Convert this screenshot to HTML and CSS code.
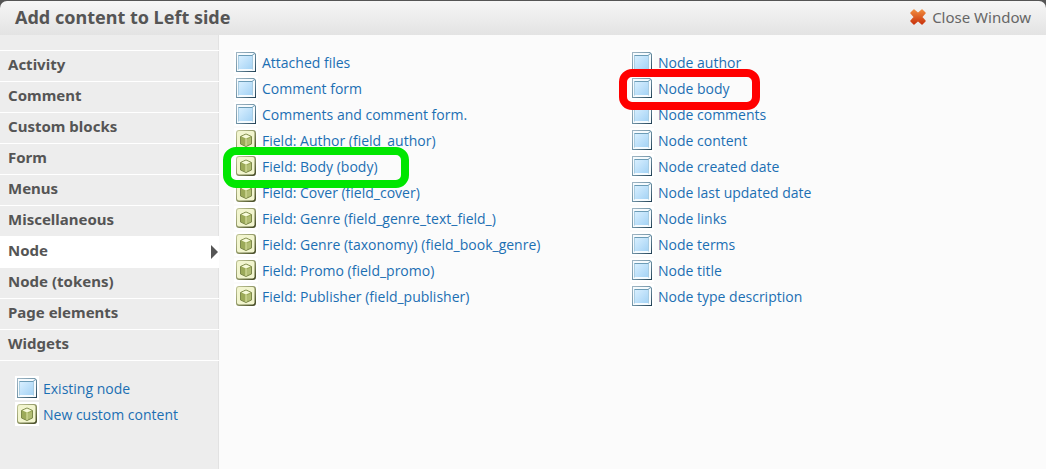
FILE: index.html
```html
<!DOCTYPE html>
<html lang="en">
  <head>
    <meta charset="utf-8">
    <title>Add content to Left side</title>
    <link rel="stylesheet" href="styles.css">
  </head>
  <body>
    <!-- icon shapes used by the lists -->
    <svg class="sprite" aria-hidden="true">
      <defs>
        <linearGradient id="blue" x1="0" y1="0" x2="1" y2="1">
          <stop offset="0" stop-color="#d8efff" />
          <stop offset="1" stop-color="#a5d3f5" />
        </linearGradient>
        <linearGradient id="edge" x1="0" y1="0" x2="1" y2="1">
          <stop offset="0" stop-color="#a3b8c6" />
          <stop offset="0.5" stop-color="#7295a8" />
          <stop offset="1" stop-color="#1e3d51" />
        </linearGradient>
        <linearGradient id="olive" x1="0" y1="0" x2="1" y2="1">
          <stop offset="0" stop-color="#c5c99c" />
          <stop offset="0.5" stop-color="#8f9665" />
          <stop offset="1" stop-color="#3d421e" />
        </linearGradient>
        <linearGradient id="orange" x1="0" y1="0" x2="0" y2="1">
          <stop offset="0" stop-color="#f08a3c" />
          <stop offset="1" stop-color="#c9330c" />
        </linearGradient>
      </defs>
      <symbol id="node" viewBox="0 0 24 24">
        <path d="M2 2h18l2 2v18H2z" fill="url(#edge)" />
        <path d="M3 3h16.500l1.500 1.500V21H3z" fill="#f6fbfe" />
        <path d="M5 6h13v13H5z" fill="url(#blue)" />
        <path d="M4.500 19.500V5.500h14v14" fill="none" stroke="#a9cde2" />
        <path d="M4.500 5.500h13.500l2.500-2" fill="none" stroke="#6c9cb6" />
      </symbol>
      <symbol id="cube" viewBox="0 0 24 24">
        <rect x="2" y="2" width="20" height="20" rx="3" fill="url(#olive)" />
        <rect x="3" y="3" width="17.500" height="17.500" rx="2" fill="#f2f5cf" />
        <path d="M6.500 8.500L12 6l5.500 2.500v7.500L12 18.500 6.500 16z" fill="#9caa59" stroke="#7d894b" stroke-linejoin="round" />
        <path d="M7.500 8.500L12 6.500l4.500 2L12 10.500z" fill="#f7fadb" />
        <path d="M12.500 11.500v6l4.500-2V9.500z" fill="#b1bd73" />
        <path d="M12 10.500V18" stroke="#e3e9ae" />
      </symbol>
    </svg>

    <div class="modal">
      <div class="modal-header">
        <h1 class="modal-title">Add content to Left side</h1>
        <a class="close" href="#">
          <svg class="close-icon" viewBox="0 0 16 16" aria-hidden="true">
            <path d="M4 1L8 4.500 12 1l3 3-3.500 4 3.500 4-3 3-4-3.500L4 15l-3-3 3.500-4L1 4z" fill="url(#orange)" stroke="url(#orange)" stroke-width="1.500" stroke-linejoin="round" />
          </svg>
          Close Window
        </a>
      </div>

      <div class="modal-content">
        <div class="sidebar">
          <ul class="categories">
            <li><a class="category" href="#">Activity</a></li>
            <li><a class="category" href="#">Comment</a></li>
            <li><a class="category" href="#">Custom blocks</a></li>
            <li><a class="category" href="#">Form</a></li>
            <li><a class="category" href="#">Menus</a></li>
            <li><a class="category" href="#">Miscellaneous</a></li>
            <li><a class="category active" href="#">Node</a></li>
            <li><a class="category" href="#">Node (tokens)</a></li>
            <li><a class="category" href="#">Page elements</a></li>
            <li><a class="category" href="#">Widgets</a></li>
          </ul>
          <ul class="types root-types">
            <li class="type"><svg class="icon"><use href="#node" /></svg><a href="#">Existing node</a></li>
            <li class="type"><svg class="icon"><use href="#cube" /></svg><a href="#">New custom content</a></li>
          </ul>
        </div>

        <div class="columns">
          <ul class="types">
            <li class="type"><svg class="icon"><use href="#node" /></svg><a href="#">Attached files</a></li>
            <li class="type"><svg class="icon"><use href="#node" /></svg><a href="#">Comment form</a></li>
            <li class="type"><svg class="icon"><use href="#node" /></svg><a href="#">Comments and comment form.</a></li>
            <li class="type"><svg class="icon"><use href="#cube" /></svg><a href="#">Field: Author (field_author)</a></li>
            <li class="type mark mark-green"><svg class="icon"><use href="#cube" /></svg><a href="#">Field: Body (body)</a></li>
            <li class="type"><svg class="icon"><use href="#cube" /></svg><a href="#">Field: Cover (field_cover)</a></li>
            <li class="type"><svg class="icon"><use href="#cube" /></svg><a href="#">Field: Genre (field_genre_text_field_)</a></li>
            <li class="type"><svg class="icon"><use href="#cube" /></svg><a href="#">Field: Genre (taxonomy) (field_book_genre)</a></li>
            <li class="type"><svg class="icon"><use href="#cube" /></svg><a href="#">Field: Promo (field_promo)</a></li>
            <li class="type"><svg class="icon"><use href="#cube" /></svg><a href="#">Field: Publisher (field_publisher)</a></li>
          </ul>
          <ul class="types">
            <li class="type"><svg class="icon"><use href="#node" /></svg><a href="#">Node author</a></li>
            <li class="type mark mark-red"><svg class="icon"><use href="#node" /></svg><a href="#">Node body</a></li>
            <li class="type"><svg class="icon"><use href="#node" /></svg><a href="#">Node comments</a></li>
            <li class="type"><svg class="icon"><use href="#node" /></svg><a href="#">Node content</a></li>
            <li class="type"><svg class="icon"><use href="#node" /></svg><a href="#">Node created date</a></li>
            <li class="type"><svg class="icon"><use href="#node" /></svg><a href="#">Node last updated date</a></li>
            <li class="type"><svg class="icon"><use href="#node" /></svg><a href="#">Node links</a></li>
            <li class="type"><svg class="icon"><use href="#node" /></svg><a href="#">Node terms</a></li>
            <li class="type"><svg class="icon"><use href="#node" /></svg><a href="#">Node title</a></li>
            <li class="type"><svg class="icon"><use href="#node" /></svg><a href="#">Node type description</a></li>
          </ul>
        </div>
      </div>
    </div>
  </body>
</html>
```

FILE: styles.css
```css
*,
*::after {
  box-sizing: border-box;
}
body {
  margin: 0;
  background-color: #555;
  color: #555;
  font-family: "Lucida Grande", "Noto Sans", "Open Sans", sans-serif;
  font-size: 14px;
}
ul {
  list-style: none;
  margin: 0;
  padding: 0;
}
a {
  color: #1b6fb3;
  text-decoration: none;
}
.sprite {
  position: absolute;
  width: 0;
  height: 0;
}
.modal {
  display: flex;
  flex-direction: column;
  min-height: 100vh;
  padding-top: 1px;
}
.modal-header {
  display: flex;
  justify-content: space-between;
  align-items: center;
  height: 34px;
  padding: 0 15px 3px;
  background: linear-gradient(#f6f6f6, #e3e3e3);
  border-radius: 7px 7px 0 0;
}
.modal-title {
  margin: 0;
  font-size: 18px;
  line-height: 24px;
}
.close {
  display: flex;
  align-items: center;
  gap: 6px;
  color: #666;
  font-size: 15px;
}
.close-icon {
  width: 16px;
  height: 16px;
}
.modal-content {
  display: flex;
  flex: 1;
  background-color: #fbfbfb;
}
.sidebar {
  width: 219px;
  flex-shrink: 0;
  padding-top: 15px;
  background-color: #ededed;
  border-right: 1px solid #e2e2e2;
}
.categories {
  margin-right: -1px;
  border-top: 1px solid #fff;
}
.category {
  display: flex;
  justify-content: space-between;
  align-items: center;
  height: 31px;
  padding: 0 1px 4px 8px;
  border-bottom: 1px solid #fff;
  color: #555;
  font-size: 15px;
  font-weight: bold;
}
.active {
  background-color: #fff;
}
/* arrow that points at the open category */
.active::after {
  content: "";
  margin-top: 4px;
  border: 7px solid transparent;
  border-left-color: #555;
  border-right: none;
}
.columns {
  display: grid;
  grid-template-columns: 1fr 1fr;
  align-items: start;
  flex: 1;
  padding: 15px 20px 15px 15px;
}
.root-types {
  padding: 15px;
}
.type {
  display: flex;
  align-items: center;
  gap: 4px;
  height: 24px;
  margin-bottom: 2px;
  font-family: "Lucida Grande", "Open Sans", "Noto Sans", sans-serif;
}
.icon {
  width: 24px;
  height: 24px;
  background-color: #fff;
}
/* coloured frame around a row */
.mark {
  position: relative;
}
.mark::after {
  content: "";
  position: absolute;
  top: -7px;
  left: -11px;
  height: 41px;
  border: 8px solid;
  border-radius: 13px;
}
.mark-green::after {
  width: 186px;
  border-color: #00e600;
}
.mark-red::after {
  width: 141px;
  border-color: #f00;
}
```
